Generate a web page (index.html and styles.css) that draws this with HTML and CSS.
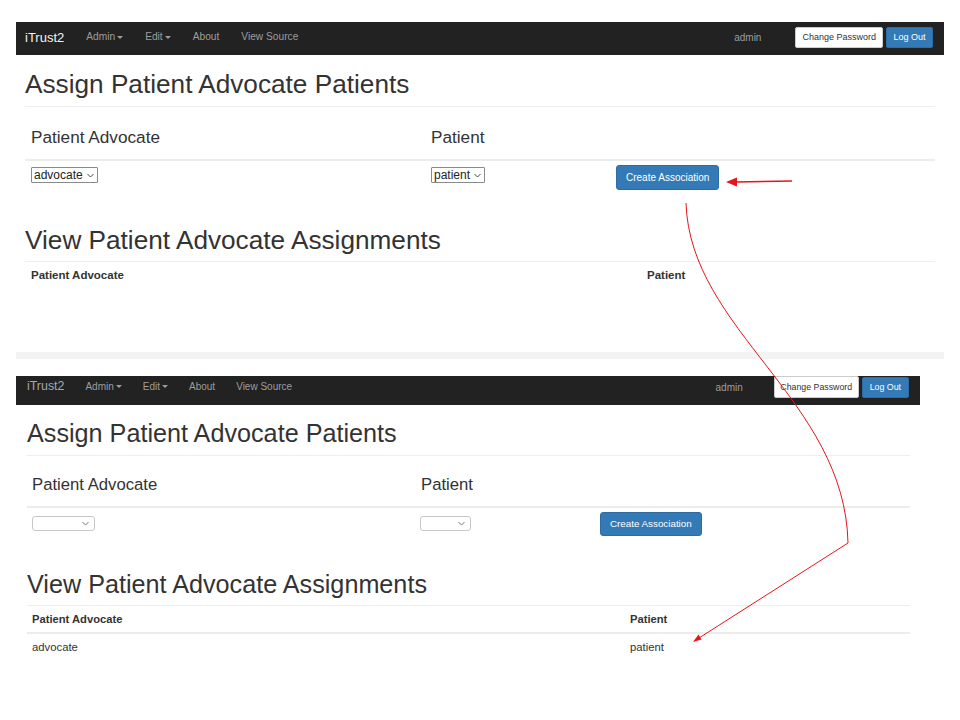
FILE: index.html
```html
<!DOCTYPE html>
<html lang="en">
<head>
<meta charset="utf-8">
<title>Assign Patient Advocate Patients</title>
<link rel="stylesheet" href="styles.css">
</head>
<body>
<div class="figure">
  <section class="shot shot-a">
    <nav class="navbar">
      <div class="nav-left">
        <span class="brand">iTrust2</span>
        <span class="nav-link">Admin<span class="caret"></span></span>
        <span class="nav-link">Edit<span class="caret"></span></span>
        <span class="nav-link">About</span>
        <span class="nav-link">View Source</span>
      </div>
      <div class="nav-right">
        <span class="user">admin</span>
        <button class="btn btn-default">Change Password</button>
        <button class="btn btn-primary">Log Out</button>
      </div>
    </nav>
    <div class="content">
      <div class="page-header"><h1>Assign Patient Advocate Patients</h1></div>
      <div class="assign-grid">
        <div class="head-cell"><h3>Patient Advocate</h3></div>
        <div class="head-cell"><h3>Patient</h3></div>
        <div class="head-cell"></div>
        <div class="body-cell"><span class="select native">advocate<svg class="chev" width="7" height="5" viewBox="0 0 7 5"><polyline points="0.5,1 3.5,4 6.5,1" fill="none" stroke="#444" stroke-width="1"/></svg></span></div>
        <div class="body-cell"><span class="select native">patient<svg class="chev" width="7" height="5" viewBox="0 0 7 5"><polyline points="0.5,1 3.5,4 6.5,1" fill="none" stroke="#444" stroke-width="1"/></svg></span></div>
        <div class="body-cell"><button class="btn btn-primary btn-create">Create Association</button></div>
      </div>
      <div class="page-header sub"><h2>View Patient Advocate Assignments</h2></div>
      <table class="assign-table">
        <thead>
          <tr><th class="col-advocate">Patient Advocate</th><th>Patient</th></tr>
        </thead>
      </table>
    </div>
  </section>

  <div class="separator"></div>

  <section class="shot shot-b">
    <nav class="navbar">
      <div class="nav-left">
        <span class="brand">iTrust2</span>
        <span class="nav-link">Admin<span class="caret"></span></span>
        <span class="nav-link">Edit<span class="caret"></span></span>
        <span class="nav-link">About</span>
        <span class="nav-link">View Source</span>
      </div>
      <div class="nav-right">
        <span class="user">admin</span>
        <button class="btn btn-default">Change Password</button>
        <button class="btn btn-primary">Log Out</button>
      </div>
    </nav>
    <div class="content">
      <div class="page-header"><h1>Assign Patient Advocate Patients</h1></div>
      <div class="assign-grid">
        <div class="head-cell"><h3>Patient Advocate</h3></div>
        <div class="head-cell"><h3>Patient</h3></div>
        <div class="head-cell"></div>
        <div class="body-cell"><span class="select empty wide"><svg class="chev" width="7" height="5" viewBox="0 0 7 5"><polyline points="0.5,1 3.5,4 6.5,1" fill="none" stroke="#777" stroke-width="1"/></svg></span></div>
        <div class="body-cell"><span class="select empty narrow"><svg class="chev" width="7" height="5" viewBox="0 0 7 5"><polyline points="0.5,1 3.5,4 6.5,1" fill="none" stroke="#777" stroke-width="1"/></svg></span></div>
        <div class="body-cell"><button class="btn btn-primary btn-create">Create Association</button></div>
      </div>
      <div class="page-header sub"><h2>View Patient Advocate Assignments</h2></div>
      <table class="assign-table">
        <thead>
          <tr><th class="col-advocate">Patient Advocate</th><th>Patient</th></tr>
        </thead>
        <tbody>
          <tr><td>advocate</td><td>patient</td></tr>
        </tbody>
      </table>
    </div>
  </section>

  <svg class="annotations" width="960" height="720" viewBox="0 0 960 720">
    <line x1="792" y1="181" x2="735" y2="182" stroke="#e8141b" stroke-width="1.6"/>
    <polygon points="726,182 737,177.5 737,186.5" fill="#e8141b"/>
    <path d="M686 203 C690 330 845 400 848 543" fill="none" stroke="#e8141b" stroke-width="1"/>
    <line x1="848" y1="543" x2="699" y2="638" stroke="#e8141b" stroke-width="1"/>
    <polygon points="693,642 698.5,634.5 701.5,639.5" fill="#e8141b"/>
  </svg>
</div>
</body>
</html>
```

FILE: styles.css
```css
html, body {
  margin: 0;
  padding: 0;
  background: #ffffff;
}

body {
  font-family: "Liberation Sans", Arial, sans-serif;
  color: #333333;
}

.figure {
  position: relative;
  width: 960px;
  height: 720px;
  padding-top: 22px;
  box-sizing: border-box;
  overflow: hidden;
}

/* ---------- screenshot frames ---------- */
.shot-a {
  margin-left: 16px;
  width: 928px;
  min-height: 330px;
}

.shot-b {
  margin-left: 16px;
  width: 904px;
  margin-top: 17px;
}

.separator {
  margin-left: 16px;
  width: 928px;
  height: 7px;
  background: #f3f3f3;
}

/* ---------- navbar ---------- */
.navbar {
  display: flex;
  justify-content: space-between;
  align-items: flex-start;
  background: #222222;
  box-sizing: border-box;
}

.shot-a .navbar {
  height: 33px;
  padding: 5px 11px 0 9px;
}

.shot-b .navbar {
  height: 29px;
  padding: 0 11px 0 11px;
}

.nav-left,
.nav-right {
  display: flex;
  align-items: center;
  height: 21px;
}

.shot-b .nav-right { height: 22px; }

.shot-a .nav-left { gap: 22px; }
.shot-b .nav-left { gap: 21px; }

.brand {
  font-size: 13px;
  color: #f2f2f2;
  line-height: 1;
}

.shot-b .brand {
  font-size: 12.4px;
  color: #a8a8a8;
}

.nav-link {
  font-size: 10.2px;
  color: #9d9d9d;
  line-height: 1;
  display: inline-flex;
  align-items: center;
}

.shot-b .nav-link { font-size: 10px; }

.caret {
  display: inline-block;
  width: 0;
  height: 0;
  margin-left: 2px;
  border-top: 3px solid #9d9d9d;
  border-left: 3px solid transparent;
  border-right: 3px solid transparent;
}

.user {
  font-size: 10px;
  color: #9d9d9d;
  margin-right: 34px;
}

.shot-b .user { margin-right: 31px; }

/* ---------- buttons ---------- */
.btn {
  font-family: "Liberation Sans", Arial, sans-serif;
  font-size: 9px;
  height: 21px;
  padding: 0 6px;
  border-radius: 2px;
  border: 1px solid;
  box-sizing: border-box;
  line-height: 1;
  cursor: pointer;
}

.btn-default {
  background: #ffffff;
  border-color: #cccccc;
  color: #333333;
}

.btn-primary {
  background: #337ab7;
  border-color: #2e6da4;
  color: #ffffff;
}

.nav-right .btn-primary {
  margin-left: 3px;
  padding: 0 6.5px;
}

.shot-b .nav-right .btn {
  font-size: 8.8px;
  padding: 0 5.5px;
}

.shot-b .nav-right .btn-default { height: 22px; }
.shot-b .nav-right .btn-primary { height: 21px; padding: 0 7px; }

.btn-create {
  font-size: 10px;
  height: 25px;
  padding: 0 9px;
  border-radius: 3px;
}

.shot-b .btn-create {
  font-size: 9.8px;
  height: 24px;
}

/* ---------- content ---------- */
.shot-a .content { padding: 0 9px; }
.shot-b .content { padding: 0 10px 0 11px; }

.page-header {
  border-bottom: 1px solid #eeeeee;
  padding-bottom: 7px;
}

.page-header h1,
.page-header h2 {
  margin: 0;
  font-weight: 400;
  font-size: 26.2px;
  line-height: 1.1;
  color: #333333;
}

.shot-a .page-header { margin-top: 15px; }
.shot-a .page-header.sub { margin-top: 36px; padding-bottom: 6px; }

.shot-b .page-header { margin-top: 15px; }
.shot-b .page-header h1,
.shot-b .page-header h2 { font-size: 25.2px; }
.shot-b .page-header.sub { margin-top: 35px; padding-bottom: 6px; }

/* ---------- assign form grid ---------- */
.assign-grid {
  display: grid;
}

.shot-a .assign-grid { grid-template-columns: 400px 185px 1fr; }
.shot-b .assign-grid { grid-template-columns: 389px 179px 1fr; }

.head-cell {
  border-bottom: 2px solid #ececec;
}

.shot-a .head-cell { padding: 21.5px 0 12px 6px; }
.shot-b .head-cell { padding: 20px 0 12px 5px; }

.head-cell h3 {
  margin: 0;
  font-weight: 400;
  font-size: 17.2px;
  line-height: 1.1;
  color: #333333;
}

.shot-b .head-cell h3 { font-size: 16.7px; }

.shot-a .body-cell { padding: 4px 0 0 6px; }
.shot-b .body-cell { padding: 4px 0 0 5px; }
.shot-b .body-cell:nth-child(5) { padding-left: 4px; }

.select {
  display: inline-flex;
  align-items: center;
  box-sizing: border-box;
  background: #ffffff;
}

.select.native {
  height: 16px;
  border: 1px solid #8a8a8a;
  border-radius: 1px;
  padding: 0 3px 0 2px;
  gap: 4px;
  font-size: 12px;
  color: #222222;
}

.select.empty {
  height: 15px;
  border: 1px solid #c8c8c8;
  border-radius: 3px;
  justify-content: flex-end;
  padding-right: 5px;
}

.select.wide { width: 63px; }
.select.narrow { width: 51px; }

.chev { display: block; }

/* ---------- assignments table ---------- */
.assign-table {
  width: 100%;
  border-collapse: collapse;
  table-layout: fixed;
}

.assign-table th {
  text-align: left;
  font-weight: 700;
  line-height: 14px;
}

.shot-a .assign-table th {
  font-size: 11.5px;
  padding: 6px 0 0 6px;
}

.shot-a .assign-table .col-advocate { width: 610px; }

.shot-b .assign-table th {
  font-size: 11.2px;
  padding: 6px 0 6px 5px;
  border-bottom: 2px solid #ececec;
}

.shot-b .assign-table .col-advocate { width: 593px; }

.assign-table td {
  font-size: 11.3px;
  line-height: 14px;
  padding: 6px 0 0 5px;
  color: #333333;
}

/* ---------- annotation overlay ---------- */
.annotations {
  position: absolute;
  top: 0;
  left: 0;
  pointer-events: none;
}
```
